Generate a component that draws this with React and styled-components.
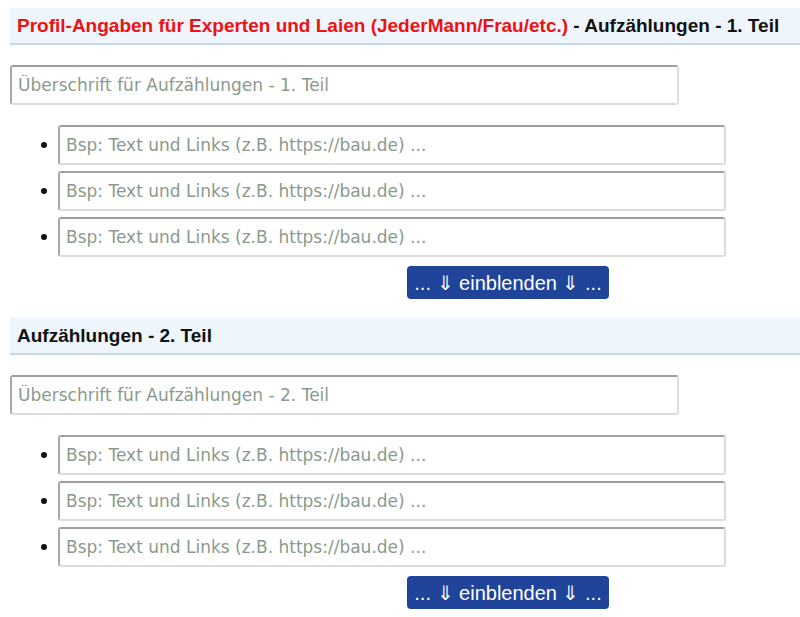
import styled, { createGlobalStyle } from "styled-components";

const GlobalStyle = createGlobalStyle`
  body {
    margin: 0;
    background: #fff;
    font-family: "Liberation Sans", Arial, sans-serif;
  }
`;

const Page = styled.div`
  padding: 8px 0 0 10px;
`;

const SectionHead = styled.div`
  height: 35px;
  display: flex;
  align-items: center;
  padding-left: 7px;
  background: #eef5fd;
  border-bottom: 2px solid #c4d6ea;
  font-size: 19px;
  font-weight: bold;
  color: #111;
  white-space: nowrap;
`;

const Red = styled.span`
  color: #ee1111;
`;

const TitleInput = styled.input`
  display: block;
  box-sizing: border-box;
  width: 669px;
  height: 40px;
  margin: 20px 0 20px 0;
  padding: 0 6px;
  border: 2px solid #dcdcdc;
  border-top-color: #a0a0a0;
  border-left-color: #a8a8a8;
  border-radius: 3px;
  font-family: "DejaVu Sans", Verdana, sans-serif;
  font-size: 17px;
  outline: none;
  &::placeholder {
    color: #8a9a8c;
  }
`;

const List = styled.div`
  display: flex;
  flex-direction: column;
  gap: 6px;
`;

const Row = styled.div`
  display: flex;
  align-items: center;
  padding-left: 31px;
`;

const Bullet = styled.span`
  width: 6px;
  height: 6px;
  border-radius: 50%;
  background: #111;
  margin-right: 11px;
`;

const ItemInput = styled(TitleInput)`
  width: 668px;
  margin: 0;
`;

const ToggleBtn = styled.button`
  display: block;
  width: 202px;
  height: 33px;
  margin: 9px 0 19px 397px;
  padding: 0;
  border: none;
  border-radius: 4px;
  background: #1f4499;
  color: #fff;
  font-family: "Liberation Sans", Arial, sans-serif;
  font-size: 20px;
  cursor: pointer;
`;

function Section({ title, heading }) {
  return (
    <>
      <SectionHead>{title}</SectionHead>
      <TitleInput placeholder={heading} />
      <List>
        {[0, 1, 2].map((i) => (
          <Row key={i}>
            <Bullet />
            <ItemInput placeholder="Bsp: Text und Links (z.B. https://bau.de) ..." />
          </Row>
        ))}
      </List>
      <ToggleBtn>... ⇓ einblenden ⇓ ...</ToggleBtn>
    </>
  );
}

export default function App() {
  return (
    <Page>
      <GlobalStyle />
      <Section
        title={
          <>
            <Red>Profil-Angaben für Experten und Laien (JederMann/Frau/etc.)</Red>
            &nbsp;- Aufzählungen - 1. Teil
          </>
        }
        heading="Überschrift für Aufzählungen - 1. Teil"
      />
      <Section
        title="Aufzählungen - 2. Teil"
        heading="Überschrift für Aufzählungen - 2. Teil"
      />
    </Page>
  );
}
